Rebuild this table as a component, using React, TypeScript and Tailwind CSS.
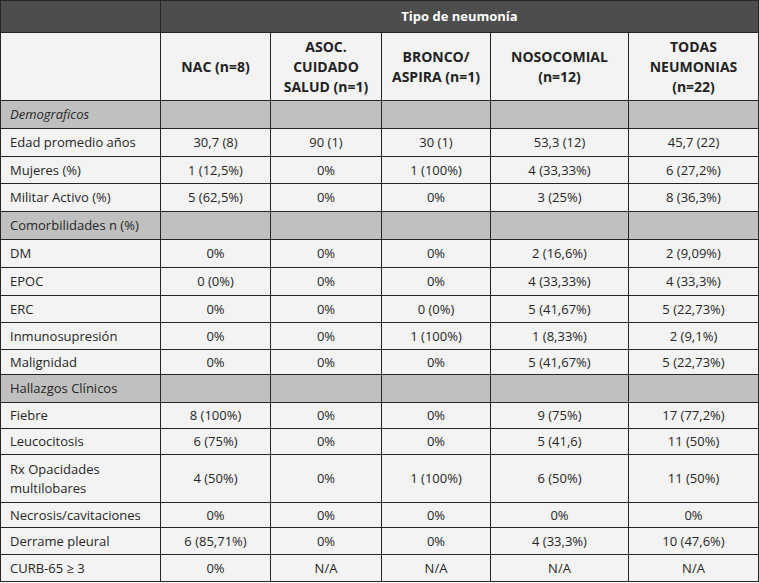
type Row = { label: string; values?: string[]; section?: boolean; italic?: boolean; h: string }

const rows: Row[] = [
  { label: 'Demograficos', section: true, italic: true, h: 'h-[28px]' },
  { label: 'Edad promedio años', values: ['30,7 (8)', '90 (1)', '30 (1)', '53,3 (12)', '45,7 (22)'], h: 'h-[28px]' },
  { label: 'Mujeres (%)', values: ['1 (12,5%)', '0%', '1 (100%)', '4 (33,33%)', '6 (27,2%)'], h: 'h-[27px]' },
  { label: 'Militar Activo (%)', values: ['5 (62,5%)', '0%', '0%', '3 (25%)', '8 (36,3%)'], h: 'h-[28px]' },
  { label: 'Comorbilidades n (%)', section: true, h: 'h-[28px]' },
  { label: 'DM', values: ['0%', '0%', '0%', '2 (16,6%)', '2 (9,09%)'], h: 'h-[28px]' },
  { label: 'EPOC', values: ['0 (0%)', '0%', '0%', '4 (33,33%)', '4 (33,3%)'], h: 'h-[28px]' },
  { label: 'ERC', values: ['0%', '0%', '0 (0%)', '5 (41,67%)', '5 (22,73%)'], h: 'h-[27px]' },
  { label: 'Inmunosupresión', values: ['0%', '0%', '1 (100%)', '1 (8,33%)', '2 (9,1%)'], h: 'h-[27px]' },
  { label: 'Malignidad', values: ['0%', '0%', '0%', '5 (41,67%)', '5 (22,73%)'], h: 'h-[25px]' },
  { label: 'Hallazgos Clínicos', section: true, h: 'h-[28px]' },
  { label: 'Fiebre', values: ['8 (100%)', '0%', '0%', '9 (75%)', '17 (77,2%)'], h: 'h-[26px]' },
  { label: 'Leucocitosis', values: ['6 (75%)', '0%', '0%', '5 (41,6)', '11 (50%)'], h: 'h-[26px]' },
  { label: 'Rx Opacidades multilobares', values: ['4 (50%)', '0%', '1 (100%)', '6 (50%)', '11 (50%)'], h: 'h-[48px]' },
  { label: 'Necrosis/cavitaciones', values: ['0%', '0%', '0%', '0%', '0%'], h: 'h-[25px]' },
  { label: 'Derrame pleural', values: ['6 (85,71%)', '0%', '0%', '4 (33,3%)', '10 (47,6%)'], h: 'h-[27px]' },
  { label: 'CURB-65 ≥ 3', values: ['0%', 'N/A', 'N/A', 'N/A', 'N/A'], h: 'h-[27px]' },
]

const cols = [
  ['NAC (n=8)'],
  ['ASOC.', 'CUIDADO', 'SALUD (n=1)'],
  ['BRONCO/', 'ASPIRA (n=1)'],
  ['NOSOCOMIAL', '(n=12)'],
  ['TODAS', 'NEUMONIAS', '(n=22)'],
]

const cell = 'border border-[#262626] px-[9px] py-0 align-middle'

export default function App() {
  return (
    <div
      className="w-[759px] h-[583px] bg-white text-[13px] leading-[19px] text-[#262626]"
      style={{ fontFamily: '"Open Sans", "Noto Sans", sans-serif' }}
    >
      <table className="w-[758px] table-fixed border-collapse">
        <colgroup>
          <col className="w-[160px]" />
          <col className="w-[110px]" />
          <col className="w-[111px]" />
          <col className="w-[109px]" />
          <col className="w-[138px]" />
          <col className="w-[130px]" />
        </colgroup>
        <thead>
          <tr className="h-[32px] bg-[#4d4d4d]">
            <th className={cell}></th>
            <th colSpan={5} className={`${cell} text-center font-bold text-white`}>
              Tipo de neumonía
            </th>
          </tr>
          <tr className="h-[68px] bg-[#f3f3f3]">
            <th className={cell}></th>
            {cols.map((lines, i) => (
              <th key={i} className={`${cell} text-center text-[14px] font-bold leading-[20px] text-[#222222]`}>
                {lines.map((l, j) => (
                  <div key={j}>{l}</div>
                ))}
              </th>
            ))}
          </tr>
        </thead>
        <tbody>
          {rows.map((r) => (
            <tr key={r.label} className={`${r.h} ${r.section ? 'bg-[#c0c0c0]' : 'bg-[#f3f3f3]'}`}>
              <td className={`${cell} text-left ${r.italic ? 'italic' : ''}`}>{r.label}</td>
              {(r.values ?? ['', '', '', '', '']).map((v, i) => (
                <td key={i} className={`${cell} text-center`}>
                  {v}
                </td>
              ))}
            </tr>
          ))}
        </tbody>
      </table>
    </div>
  )
}
